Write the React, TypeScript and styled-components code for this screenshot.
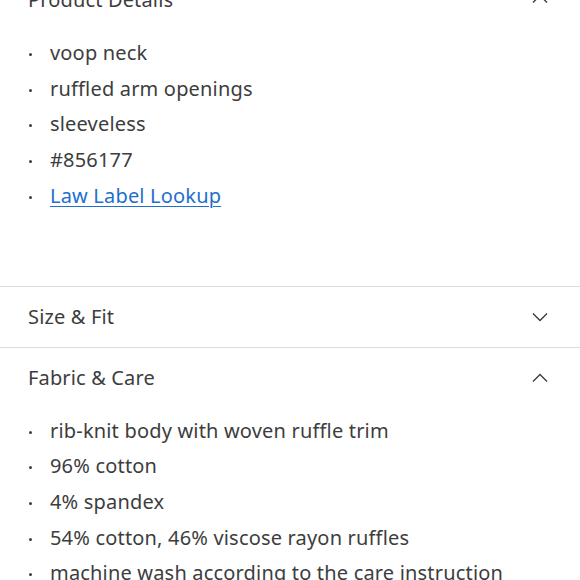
import React from "react";
import styled, { createGlobalStyle } from "styled-components";

const GlobalStyle = createGlobalStyle`
  body {
    margin: 0;
    background: #ffffff;
    font-family: "Noto Sans", "Open Sans", sans-serif;
    color: #3d3d3d;
    overflow: hidden;
  }
`;

const Page = styled.div`
  width: 580px;
  margin-top: -31px;
`;

const Section = styled.section<{ last?: boolean }>`
  border-bottom: ${({ last }) => (last ? "none" : "1px solid #dcdcdc")};
`;

const Header = styled.div`
  display: flex;
  align-items: center;
  justify-content: space-between;
  height: 60px;
  padding: 0 32px 0 28px;
`;

const Title = styled.h2`
  margin: 0;
  font-size: 20px;
  font-weight: 400;
  letter-spacing: 0.15px;
  color: #3d3d3d;
`;

const List = styled.ul<{ bottom: number; top: number }>`
  list-style: none;
  margin: 0;
  padding: ${({ top, bottom }) => `${top}px 50px ${bottom}px 28px`};
`;

const Item = styled.li`
  display: flex;
  align-items: flex-start;
  line-height: 35.7px;
  font-size: 20px;
  letter-spacing: 0.18px;
  color: #3d3d3d;
  &::before {
    content: "";
    width: 3px;
    height: 3px;
    border-radius: 50%;
    background: #3d3d3d;
    margin: 18px 18px 0 1px;
    flex: none;
  }
`;

const Link = styled.a`
  color: #1f6fcc;
  text-decoration: underline;
  text-underline-offset: 3px;
  text-decoration-thickness: 1px;
`;

const Chevron = ({ up }: { up?: boolean }) => (
  <svg width="16" height="10" viewBox="0 0 16 10" fill="none">
    <path
      d={up ? "M1 8.5 L8 1.5 L15 8.5" : "M1 1.5 L8 8.5 L15 1.5"}
      stroke="#3d3d3d"
      strokeWidth="1.4"
    />
  </svg>
);

const App: React.FC = () => {
  return (
    <>
      <GlobalStyle />
      <Page>
        <Section>
          <Header>
            <Title>Product Details</Title>
            <Chevron up />
          </Header>
          <List top={6} bottom={72}>
            <Item>voop neck</Item>
            <Item>ruffled arm openings</Item>
            <Item>sleeveless</Item>
            <Item>#856177</Item>
            <Item>
              <Link href="#">Law Label Lookup</Link>
            </Item>
          </List>
        </Section>
        <Section>
          <Header>
            <Title>Size &amp; Fit</Title>
            <Chevron />
          </Header>
        </Section>
        <Section last>
          <Header>
            <Title>Fabric &amp; Care</Title>
            <Chevron up />
          </Header>
          <List top={5} bottom={20}>
            <Item>rib-knit body with woven ruffle trim</Item>
            <Item>96% cotton</Item>
            <Item>4% spandex</Item>
            <Item>54% cotton, 46% viscose rayon ruffles</Item>
            <Item>machine wash according to the care instruction label</Item>
          </List>
        </Section>
      </Page>
    </>
  );
};

export default App;
